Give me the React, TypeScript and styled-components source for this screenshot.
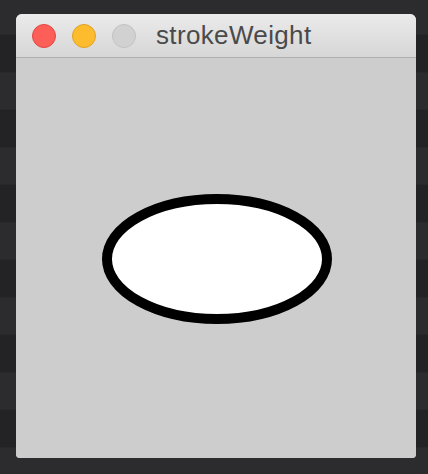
import React from "react";
import styled, { createGlobalStyle } from "styled-components";

const Global = createGlobalStyle`
  html, body { margin: 0; padding: 0; }
  body { background: #232326; }
`;

const Page = styled.div`
  width: 428px;
  height: 474px;
  box-sizing: border-box;
  padding: 14px 0 0 16px;
  background: repeating-linear-gradient(
    to bottom,
    #2c2c2e 0px,
    #2c2c2e 37.5px,
    #232326 37.5px,
    #232326 75px
  );
  background-position: 0 -2.5px;
  overflow: hidden;
`;

const Window = styled.div`
  width: 400px;
  border-radius: 6px 6px 4px 4px;
  overflow: hidden;
  background: #cdcdcd;
`;

const TitleBar = styled.div`
  height: 43px;
  display: flex;
  align-items: center;
  padding-left: 16px;
  gap: 16px;
  background: linear-gradient(to bottom, #ebebeb, #d6d6d6);
  border-bottom: 1px solid #b1b1b1;
`;

const Light = styled.span<{ $fill: string; $edge: string }>`
  width: 24px;
  height: 24px;
  border-radius: 50%;
  box-sizing: border-box;
  background: ${(p) => p.$fill};
  border: 1px solid ${(p) => p.$edge};
  flex: none;
`;

const Title = styled.span`
  margin-left: 4px;
  font-family: "Liberation Sans", Arial, sans-serif;
  font-size: 26px;
  letter-spacing: 0.35px;
  color: #4a4a4a;
  line-height: 1;
  padding-bottom: 1px;
`;

const Canvas = styled.div`
  width: 400px;
  height: 400px;
  background: #cdcdcd;
`;

export default function App() {
  return (
    <>
      <Global />
      <Page>
        <Window>
          <TitleBar>
            <Light $fill="#fc5f57" $edge="#e2463f" />
            <Light $fill="#fdbc2e" $edge="#e0a123" />
            <Light $fill="#d1d1d1" $edge="#c2c2c2" />
            <Title>strokeWeight</Title>
          </TitleBar>
          <Canvas>
            <svg width="400" height="400" viewBox="0 0 400 400">
              <ellipse
                cx="201"
                cy="201"
                rx="110"
                ry="60"
                fill="#ffffff"
                stroke="#000000"
                strokeWidth="10"
              />
            </svg>
          </Canvas>
        </Window>
      </Page>
    </>
  );
}
